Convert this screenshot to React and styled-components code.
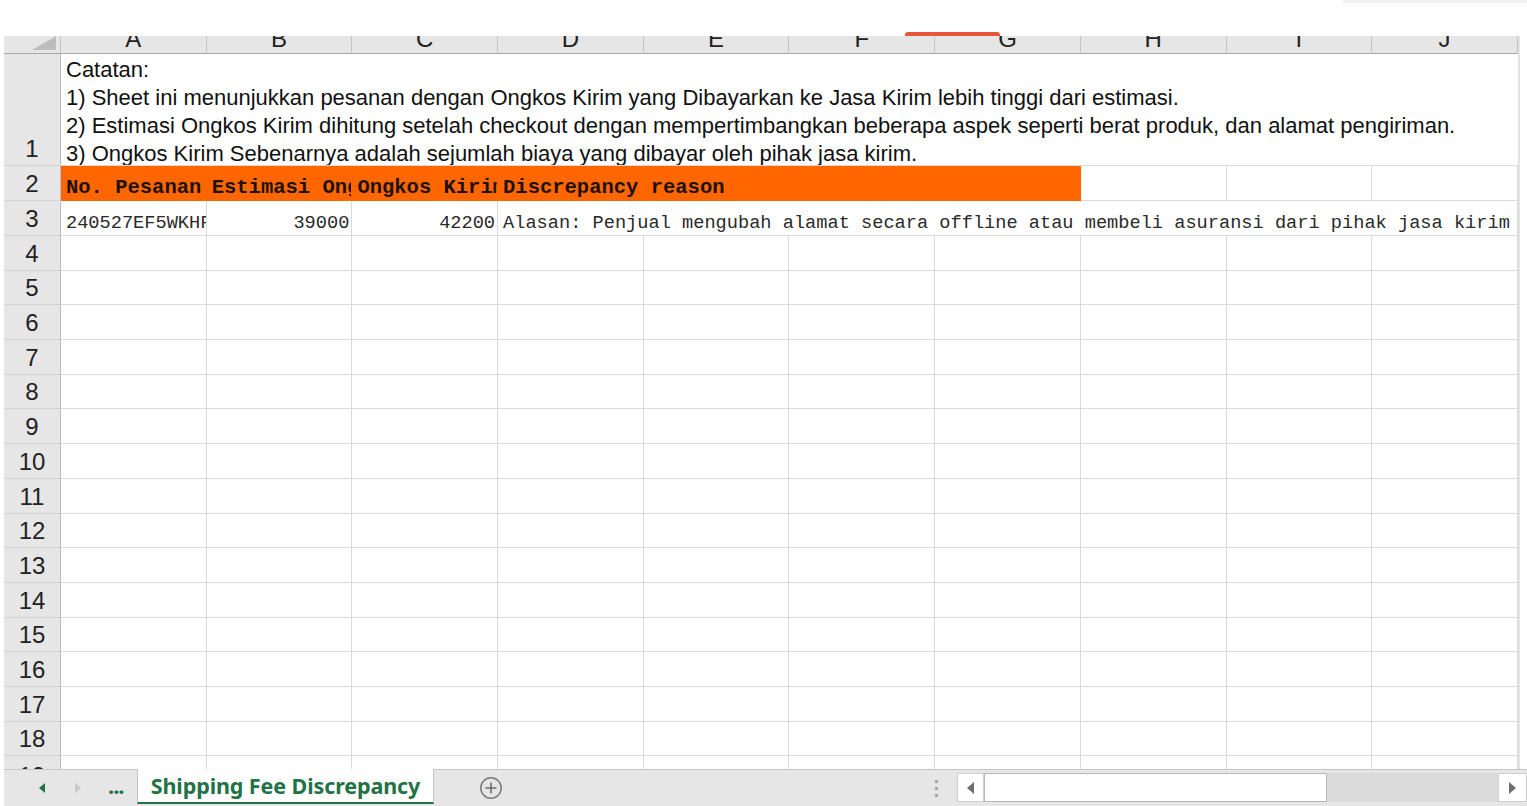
import React from "react";
import styled, { createGlobalStyle } from "styled-components";

const GlobalStyle = createGlobalStyle`
  html, body {
    margin: 0;
    padding: 0;
    background: #ffffff;
  }
  * {
    box-sizing: border-box;
  }
`;

const COLUMNS = ["A", "B", "C", "D", "E", "F", "G", "H", "I", "J"];
const GRID = "57px repeat(10, 145.7px) 9px";
const LINE = "#dadada";
const HEAD_BG = "#e6e6e6";
const GREEN = "#217346";

const NOTES = [
  "Catatan:",
  "1) Sheet ini menunjukkan pesanan dengan Ongkos Kirim yang Dibayarkan ke Jasa Kirim lebih tinggi dari estimasi.",
  "2) Estimasi Ongkos Kirim dihitung setelah checkout dengan mempertimbangkan beberapa aspek seperti berat produk, dan alamat pengiriman.",
  "3) Ongkos Kirim Sebenarnya adalah sejumlah biaya yang dibayar oleh pihak jasa kirim.",
];

const Page = styled.div`
  width: 1527px;
  height: 806px;
  display: flex;
  flex-direction: column;
  overflow: hidden;
  font-family: "Liberation Sans", Arial, sans-serif;
`;

const TopStrip = styled.div`
  height: 36px;
  flex: none;
  position: relative;
`;

const TopRightBar = styled.div`
  position: absolute;
  top: 0;
  right: 0;
  width: 184px;
  height: 3px;
  background: #f0f0f0;
  border-bottom-left-radius: 4px;
`;

const RecordMark = styled.div`
  position: absolute;
  bottom: 0;
  left: 905px;
  width: 95px;
  height: 4px;
  background: #e8553b;
  border-radius: 3px 3px 0 0;
`;

const Sheet = styled.div`
  flex: 1;
  min-height: 0;
  overflow: hidden;
  padding-left: 4px;
`;

const Row = styled.div`
  display: grid;
  grid-template-columns: ${GRID};
  grid-template-rows: ${(p) => p.$height}px;
  height: ${(p) => p.$height}px;
  overflow: hidden;
`;

const CornerCell = styled.div`
  background: ${HEAD_BG};
  border-right: 1px solid #c4c4c4;
  border-bottom: 1px solid #a8a8a8;
  display: flex;
  justify-content: flex-end;
  align-items: flex-end;
  padding: 0 4px 3px 0;
`;

const ColHeadCell = styled.div`
  background: ${HEAD_BG};
  border-right: 1px solid #c4c4c4;
  border-bottom: 1px solid #a8a8a8;
  display: flex;
  justify-content: center;
  align-items: flex-end;
  overflow: hidden;
  font-size: 24px;
  line-height: 24px;
  color: #222;
  span {
    margin-bottom: 2px;
  }
`;

const RowHeadCell = styled.div`
  background: ${HEAD_BG};
  border-right: 1px solid #bdbdbd;
  border-bottom: 1px solid #d2d2d2;
  display: flex;
  justify-content: center;
  align-items: ${(p) => (p.$top ? "flex-start" : "flex-end")};
  overflow: hidden;
  font-size: 24px;
  line-height: 24px;
  color: #222;
  padding-bottom: ${(p) => (p.$top ? 0 : 4)}px;
  padding-top: ${(p) => (p.$top ? 8 : 0)}px;
`;

const Cell = styled.div`
  grid-column: span ${(p) => p.$span || 1};
  background: ${(p) => p.$fill || "#ffffff"};
  border-right: 1px solid ${(p) => (p.$fill ? p.$fill : LINE)};
  border-bottom: 1px solid ${(p) => (p.$fill ? p.$fill : LINE)};
  display: flex;
  align-items: flex-end;
  justify-content: ${(p) => (p.$right ? "flex-end" : "flex-start")};
  padding: 0 2px 1px 5px;
  overflow: hidden;
  white-space: nowrap;
  font-family: "Liberation Mono", "Courier New", monospace;
  font-size: ${(p) => (p.$bold ? 20.5 : 18.65)}px;
  font-weight: ${(p) => (p.$bold ? 700 : 400)};
  line-height: 22px;
  color: ${(p) => (p.$bold ? "#1c1206" : "#2a2a2a")};
`;

const NoteCell = styled.div`
  grid-column: span 10;
  border-bottom: 1px solid ${LINE};
  overflow: hidden;
  padding: 2px 0 0 5px;
  white-space: nowrap;
  font-size: 22px;
  line-height: 28px;
  color: #111;
`;

const EdgeCell = styled.div`
  background: #ffffff;
  border-left: 2px solid #e3e3e3;
`;

const TabBar = styled.div`
  height: 37px;
  flex: none;
  margin-left: 4px;
  background: #e6e6e6;
  border-top: 1px solid #c6c6c6;
  display: flex;
  align-items: stretch;
`;

const NavGroup = styled.div`
  width: 133px;
  display: flex;
  align-items: center;
  padding-left: 35px;
`;

const NavArrow = styled.span`
  display: flex;
  margin-right: ${(p) => p.$gap}px;
`;

const Ellipsis = styled.span`
  font-family: "Noto Sans", sans-serif;
  font-weight: 700;
  font-size: 22px;
  letter-spacing: -1px;
  color: ${GREEN};
  margin-top: -6px;
`;

const SheetTab = styled.div`
  width: 297px;
  margin-top: -1px;
  margin-bottom: 2px;
  background: #ffffff;
  border-left: 1px solid #c6c6c6;
  border-right: 1px solid #c6c6c6;
  border-bottom: 2px solid ${GREEN};
  display: flex;
  align-items: center;
  justify-content: center;
  font-family: "Noto Sans", "Open Sans", sans-serif;
  font-weight: 700;
  font-size: 21.5px;
  letter-spacing: -0.1px;
  color: ${GREEN};
  padding-bottom: 1px;
`;

const AddSheet = styled.div`
  width: 114px;
  display: flex;
  align-items: center;
  justify-content: center;
`;

const Spacer = styled.div`
  flex: 1;
`;

const Splitter = styled.div`
  width: 24px;
  display: flex;
  flex-direction: column;
  align-items: center;
  justify-content: center;
  gap: 4px;
  margin-right: 9px;
  i {
    width: 3px;
    height: 3px;
    background: #a6a6a6;
  }
`;

const ScrollBar = styled.div`
  width: 570px;
  margin: 3px 0 4px;
  display: flex;
`;

const ScrollButton = styled.div`
  width: ${(p) => p.$width}px;
  background: #ffffff;
  border: 1px solid #cfcfcf;
  display: flex;
  align-items: center;
  justify-content: center;
`;

const ScrollThumb = styled.div`
  width: 343px;
  background: #ffffff;
  border: 1px solid #b8b8b8;
`;

const ScrollTrack = styled.div`
  flex: 1;
  background: #dbdbdb;
`;

const Triangle = ({ dir, color, w = 6, h = 10 }) => (
  <svg width={w} height={h} viewBox={`0 0 ${w} ${h}`}>
    {dir === "left" ? (
      <polygon points={`${w},0 ${w},${h} 0,${h / 2}`} fill={color} />
    ) : (
      <polygon points={`0,0 0,${h} ${w},${h / 2}`} fill={color} />
    )}
  </svg>
);

const CornerMark = () => (
  <svg width="24" height="14" viewBox="0 0 24 14">
    <polygon points="24,0 24,14 0,14" fill="#bdbdbd" />
  </svg>
);

const PlusCircle = () => (
  <svg width="24" height="24" viewBox="0 0 24 24">
    <circle cx="12" cy="12" r="10.2" fill="none" stroke="#7a7a7a" strokeWidth="1.5" />
    <path d="M12 6.5v11M6.5 12h11" stroke="#6a6a6a" strokeWidth="1.5" />
  </svg>
);

const EmptyRow = ({ n, top }) => (
  <Row $height={34.7}>
    <RowHeadCell $top={top}>{n}</RowHeadCell>
    {COLUMNS.map((c) => (
      <Cell key={c} />
    ))}
    <EdgeCell />
  </Row>
);

export default function App() {
  const emptyRows = [];
  for (let i = 4; i <= 19; i++) emptyRows.push(i);

  return (
    <Page>
      <GlobalStyle />
      <TopStrip>
        <TopRightBar />
        <RecordMark />
      </TopStrip>
      <Sheet>
        <Row $height={18}>
          <CornerCell>
            <CornerMark />
          </CornerCell>
          {COLUMNS.map((c) => (
            <ColHeadCell key={c}>
              <span>{c}</span>
            </ColHeadCell>
          ))}
          <EdgeCell />
        </Row>
        <Row $height={112}>
          <RowHeadCell>1</RowHeadCell>
          <NoteCell>
            {NOTES.map((line) => (
              <div key={line}>{line}</div>
            ))}
          </NoteCell>
          <EdgeCell />
        </Row>
        <Row $height={35}>
          <RowHeadCell>2</RowHeadCell>
          <Cell $fill="#ff6600" $bold>No. Pesanan</Cell>
          <Cell $fill="#ff6600" $bold>Estimasi Ongkos Kirim</Cell>
          <Cell $fill="#ff6600" $bold>Ongkos Kirim Sebenarnya</Cell>
          <Cell $fill="#ff6600" $bold $span={4}>Discrepancy reason</Cell>
          <Cell />
          <Cell />
          <Cell />
          <EdgeCell />
        </Row>
        <Row $height={35}>
          <RowHeadCell>3</RowHeadCell>
          <Cell>240527EF5WKHFX</Cell>
          <Cell $right>39000</Cell>
          <Cell $right>42200</Cell>
          <Cell $span={7}>
            Alasan: Penjual mengubah alamat secara offline atau membeli asuransi dari pihak jasa kirim
          </Cell>
          <EdgeCell />
        </Row>
        {emptyRows.map((n) => (
          <EmptyRow key={n} n={n} top={n === 19} />
        ))}
      </Sheet>
      <TabBar>
        <NavGroup>
          <NavArrow $gap={30}>
            <Triangle dir="left" color={GREEN} />
          </NavArrow>
          <NavArrow $gap={27}>
            <Triangle dir="right" color="#c8c8c8" />
          </NavArrow>
          <Ellipsis>...</Ellipsis>
        </NavGroup>
        <SheetTab>Shipping Fee Discrepancy</SheetTab>
        <AddSheet>
          <PlusCircle />
        </AddSheet>
        <Spacer />
        <Splitter>
          <i />
          <i />
          <i />
        </Splitter>
        <ScrollBar>
          <ScrollButton $width={27}>
            <Triangle dir="left" color="#6e6e6e" w={7} h={12} />
          </ScrollButton>
          <ScrollThumb />
          <ScrollTrack />
          <ScrollButton $width={29}>
            <Triangle dir="right" color="#6e6e6e" w={7} h={12} />
          </ScrollButton>
        </ScrollBar>
      </TabBar>
    </Page>
  );
}
